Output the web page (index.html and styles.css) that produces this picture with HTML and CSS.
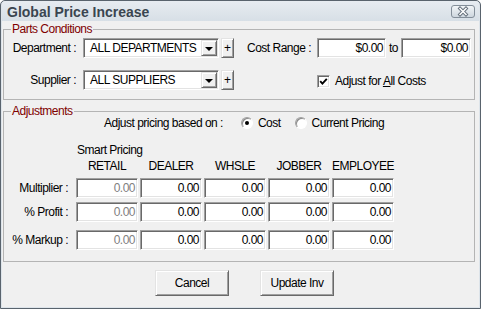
FILE: index.html
```html
<!DOCTYPE html>
<html lang="en">

<head>
    <meta charset="UTF-8">
    <title>Global Price Increase</title>
    <link rel="stylesheet" href="styles.css">
</head>

<body>

    <div class="window">
        <div class="titlebar">
            <span class="title">Global Price Increase</span>
            <span class="close">
                <svg width="24" height="13" viewBox="0 0 24 13">
                    <defs>
                        <linearGradient id="cg" x1="0" y1="0" x2="0" y2="1">
                            <stop offset="0" stop-color="#f3f6f8"/>
                            <stop offset="1" stop-color="#ccd5dd"/>
                        </linearGradient>
                    </defs>
                    <rect x="0.5" y="0.5" width="23" height="12" rx="2.5" fill="url(#cg)" stroke="#838e99"/>
                    <path d="M9 3.5 L15 9.5 M15 3.5 L9 9.5" stroke="#66717c" stroke-width="3.4" stroke-linecap="square"/>
                    <path d="M9 3.5 L15 9.5 M15 3.5 L9 9.5" stroke="#ffffff" stroke-width="1.5" stroke-linecap="square"/>
                </svg>
            </span>
        </div>

        <div class="client">
            <!-- Condiciones de partes -->
            <fieldset class="group parts">
                <legend>Parts Conditions</legend>
                <div class="row">
                    <span class="lbl">Department :</span>
                    <div class="combo">
                        <span class="combo-text">ALL DEPARTMENTS</span>
                        <span class="combo-btn"><span class="arrow"></span></span>
                    </div>
                    <span class="plus">+</span>
                    <span class="cost-lbl">Cost Range :</span>
                    <div class="field money">$0.00</div>
                    <span class="to">to</span>
                    <div class="field money wide">$0.00</div>
                </div>
                <div class="row">
                    <span class="lbl">Supplier :</span>
                    <div class="combo">
                        <span class="combo-text">ALL SUPPLIERS</span>
                        <span class="combo-btn"><span class="arrow"></span></span>
                    </div>
                    <span class="plus">+</span>
                    <span class="check">
                        <svg width="9" height="9" viewBox="0 0 9 9">
                            <path d="M1.2 4.2 L3.4 6.6 L7.8 1.8" fill="none" stroke="#000" stroke-width="1.9"/>
                        </svg>
                    </span>
                    <span class="check-lbl">Adjust for <u>A</u>ll Costs</span>
                </div>
            </fieldset>

            <!-- Ajustes -->
            <fieldset class="group adjust">
                <legend>Adjustments</legend>
                <div class="basis">
                    <span>Adjust pricing based on :</span>
                    <span class="radio on"></span>
                    <span class="radio-lbl">Cost</span>
                    <span class="radio second"></span>
                    <span class="radio-lbl">Current Pricing</span>
                </div>
                <div class="smart">Smart Pricing</div>
                <div class="prow heads">
                    <span></span>
                    <span>RETAIL</span>
                    <span>DEALER</span>
                    <span>WHSLE</span>
                    <span>JOBBER</span>
                    <span>EMPLOYEE</span>
                </div>
                <div class="prow vals first">
                    <span class="plbl">Multiplier :</span>
                    <div class="field off">0.00</div>
                    <div class="field">0.00</div>
                    <div class="field">0.00</div>
                    <div class="field">0.00</div>
                    <div class="field">0.00</div>
                </div>
                <div class="prow vals second">
                    <span class="plbl">% Profit :</span>
                    <div class="field off">0.00</div>
                    <div class="field">0.00</div>
                    <div class="field">0.00</div>
                    <div class="field">0.00</div>
                    <div class="field">0.00</div>
                </div>
                <div class="prow vals third">
                    <span class="plbl">% Markup :</span>
                    <div class="field off">0.00</div>
                    <div class="field">0.00</div>
                    <div class="field">0.00</div>
                    <div class="field">0.00</div>
                    <div class="field">0.00</div>
                </div>
            </fieldset>

            <div class="actions">
                <button class="btn cancel">Cancel</button>
                <button class="btn update">Update Inv</button>
            </div>
        </div>
    </div>

</body>

</html>
```

FILE: styles.css
```css
body {
    margin: 0;
    font-family: "Liberation Sans", Arial, sans-serif;
    font-size: 12px;
    letter-spacing: -0.5px;
    color: #000;
}

.window {
    width: 481px;
    height: 309px;
    box-sizing: border-box;
    border: 1px solid #59636d;
    border-radius: 5px 5px 0 0;
    background-color: #dde4ea;
    padding: 0 1px 1px;
    display: flex;
    flex-direction: column;
}

.titlebar {
    height: 20px;
    display: flex;
    justify-content: space-between;
    align-items: flex-start;
    background: linear-gradient(#e7ecf1, #d7dfe6);
    border-radius: 4px 4px 0 0;
}

.title {
    font-size: 14px;
    font-weight: bold;
    letter-spacing: 0;
    color: #3a4550;
    padding: 2px 0 0 5px;
    line-height: 18px;
}

.close {
    margin: 4px 4px 0 0;
    height: 13px;
    display: block;
}

.close svg {
    display: block;
}

.client {
    flex: 1;
    background-color: #f0f0f0;
}

.group {
    border: 1px solid #b4b4b4;
    margin: 1px 4px 0 1px;
    padding: 2px 0 9px 0;
    min-width: 0;
}

.group legend {
    margin-left: 7px;
    padding: 0 1px;
    line-height: 14px;
    color: #800000;
}

.adjust {
    margin-top: 4px;
    padding: 1px 0 11px 0;
}

.row {
    display: flex;
    align-items: center;
    height: 20px;
}

.row + .row {
    margin-top: 12px;
}

.lbl {
    width: 72px;
    text-align: right;
    margin-right: 7px;
}

/* campos hundidos estilo Windows */
.field,
.combo,
.check {
    box-sizing: border-box;
    background-color: #fff;
    border: 1px solid;
    border-color: #a0a0a0 #fff #fff #a0a0a0;
    box-shadow: inset 1px 1px 0 #696969, inset -1px -1px 0 #e3e3e3;
}

.combo {
    width: 136px;
    height: 20px;
    display: flex;
    align-items: center;
}

.combo-text {
    flex: 1;
    padding-left: 6px;
}

.combo-btn,
.plus,
.btn {
    box-sizing: border-box;
    background-color: #f0f0f0;
    border: 1px solid;
    border-color: #e3e3e3 #696969 #696969 #e3e3e3;
    box-shadow: inset 1px 1px 0 #fff, inset -1px -1px 0 #a0a0a0;
}

.combo-btn {
    width: 16px;
    height: 16px;
    margin-right: 1px;
    display: flex;
    align-items: center;
    justify-content: center;
}

.arrow {
    width: 0;
    height: 0;
    border-left: 4px solid transparent;
    border-right: 4px solid transparent;
    border-top: 4px solid #000;
    margin-top: 1px;
}

.plus {
    width: 13px;
    height: 20px;
    margin-left: 2px;
    display: flex;
    align-items: center;
    justify-content: center;
    letter-spacing: 0;
}

.cost-lbl {
    width: 65px;
    margin-left: 13px;
}

.field {
    height: 20px;
    line-height: 18px;
    text-align: right;
    padding-right: 2px;
}

.money {
    width: 69px;
    margin-left: 5px;
}

.money.wide {
    width: 70px;
    margin-left: 0;
}

.to {
    width: 15px;
    text-align: center;
}

.check {
    width: 13px;
    height: 13px;
    margin: 2px 0 0 83px;
    display: flex;
    align-items: center;
    justify-content: center;
}

.check svg {
    display: block;
}

.check-lbl {
    margin: 1px 0 0 5px;
}

.basis {
    display: flex;
    align-items: center;
    height: 14px;
    margin-top: -3px;
    padding-left: 100px;
}

.radio {
    width: 12px;
    height: 12px;
    box-sizing: border-box;
    border-radius: 50%;
    background-color: #fff;
    border: 1px solid;
    border-color: #a0a0a0 #fff #fff #a0a0a0;
    box-shadow: inset 1px 1px 0 #8a8a8a;
    margin-left: 18px;
    display: flex;
    align-items: center;
    justify-content: center;
}

.radio.on::after {
    content: "";
    width: 4px;
    height: 4px;
    border-radius: 50%;
    background-color: #000;
}

.radio.second {
    margin-left: 14px;
}

.radio-lbl {
    margin-left: 5px;
}

.smart {
    margin-top: 13px;
    height: 14px;
    line-height: 14px;
    padding-left: 73px;
}

.prow {
    display: grid;
    grid-template-columns: 70px repeat(5, 62px);
    column-gap: 2px;
}

.heads {
    margin-top: 2px;
    line-height: 14px;
    text-align: center;
}

.vals {
    height: 20px;
    align-items: center;
}

.vals.first {
    margin-top: 5px;
}

.vals.second {
    margin-top: 4px;
}

.vals.third {
    margin-top: 8px;
}

.plbl {
    text-align: right;
    padding-right: 6px;
}

.field.off {
    color: #808080;
}

.actions {
    display: flex;
    margin-top: 8px;
}

.btn {
    width: 74px;
    height: 26px;
    font-family: "Liberation Sans", Arial, sans-serif;
    font-size: 12px;
    letter-spacing: -0.5px;
    color: #000;
    padding: 0;
}

.cancel {
    margin-left: 153px;
}

.update {
    margin-left: 31px;
}
```
